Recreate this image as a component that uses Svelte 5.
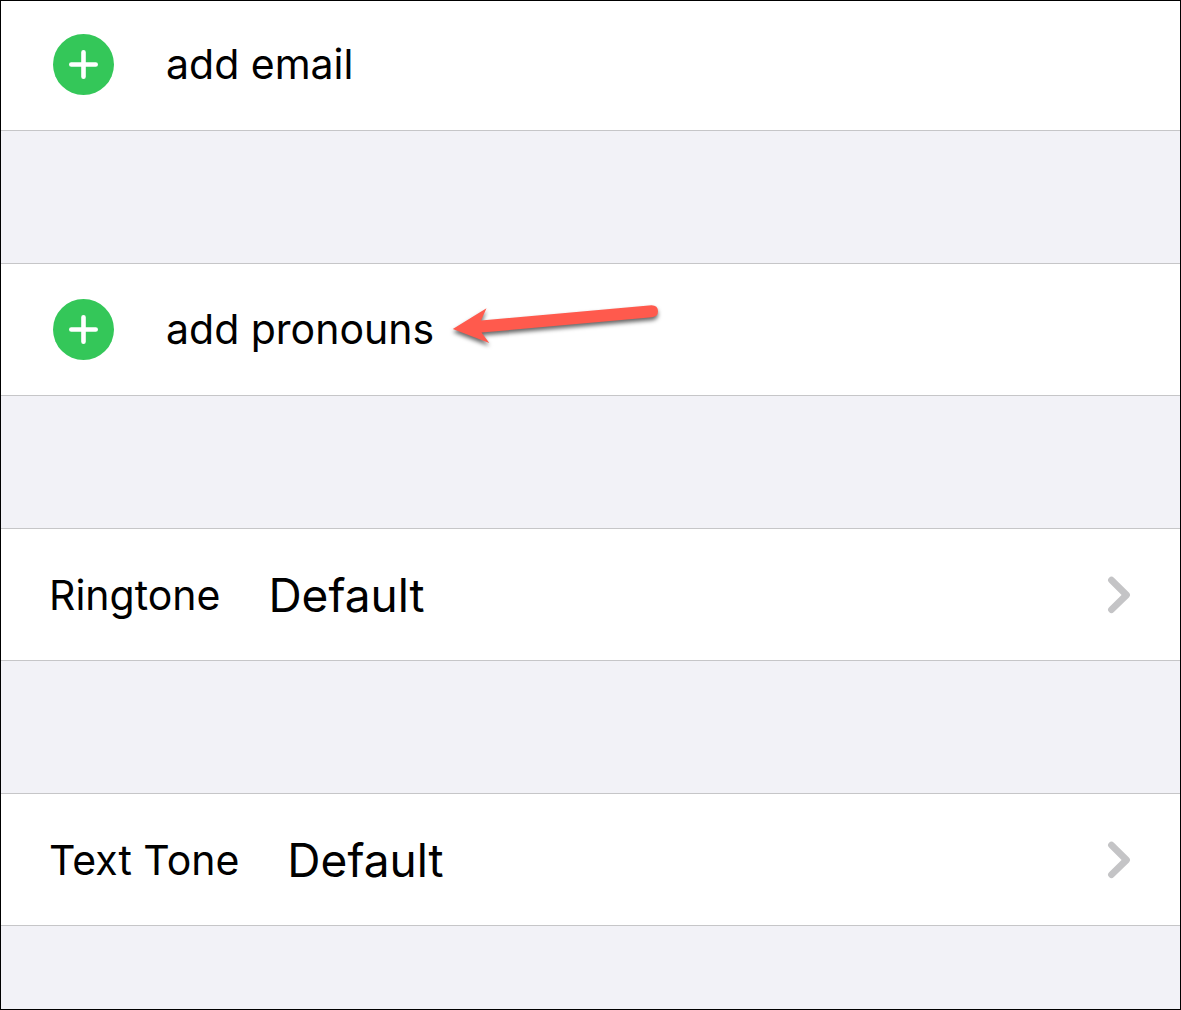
<script>
  const additions = ['email', 'pronouns'];
  const tones = ['Ringtone', 'Text Tone'];
</script>

<main>
  {#each additions as item}
    <section>
      <button class="row add">
        <svg class="plus" viewBox="0 0 61 61" aria-hidden="true">
          <circle cx="30.5" cy="30.5" r="30.5" fill="#34c759" />
          <path d="M30.5 18.3v24.4M18.3 30.5h24.4" fill="none" stroke="#fff" stroke-width="4.6" stroke-linecap="round" />
        </svg>
        <span class="label">add {item}</span>
        {#if item === 'pronouns'}
          <svg class="arrow" viewBox="0 0 220 61" aria-hidden="true">
            <path d="M6.8 30L40.5 9.3L35 21.5L205.5 6.2Q212 6.2 212 12.2Q212 17.5 206 18.2L35.5 33.6L43.3 44Z" fill="#ff5a4d" />
          </svg>
        {/if}
      </button>
    </section>
  {/each}
  {#each tones as tone}
    <section>
      <button class="row tone">
        <span class="label">{tone}</span>
        <span class="value">Default</span>
        <svg class="chevron" viewBox="0 0 26 40" aria-hidden="true">
          <path d="M5.5 5.2L20.5 20L5.5 34.6" fill="none" stroke="#c4c4c6" stroke-width="6.8" stroke-linecap="round" stroke-linejoin="round" />
        </svg>
      </button>
    </section>
  {/each}
</main>

<style>
  :global(body) { margin: 0; }
  main {
    box-sizing: border-box;
    min-height: 100vh;
    border: 1px solid #000;
    background: #f2f2f7;
    font-family: Inter, sans-serif;
    display: flex;
    flex-direction: column;
    gap: 132px;
  }
  section { background: #fff; border-block: 1px solid #c6c6c8; }
  section:first-child { border-top: 0; }
  .row {
    display: flex;
    align-items: center;
    box-sizing: border-box;
    width: 100%;
    height: 131px;
    padding: 0 48px;
    border: 0;
    background: none;
    font: inherit;
    color: #000;
    text-align: left;
  }
  section:first-child .row { height: 129px; padding-bottom: 2px; }
  .plus { flex: none; width: 61px; height: 61px; margin: 0 52px 0 4px; }
  .label { font-size: 41px; line-height: 51px; }
  .tone .label { line-height: 52px; }
  .value { font-size: 46px; line-height: 56px; margin-left: 48px; }
  .arrow {
    flex: none;
    width: 220px;
    height: 61px;
    margin-left: 12px;
    filter: drop-shadow(0 3px 2px rgb(0 0 0 / 60%));
  }
  .chevron { flex: none; width: 26px; height: 40px; margin-left: auto; }
</style>
